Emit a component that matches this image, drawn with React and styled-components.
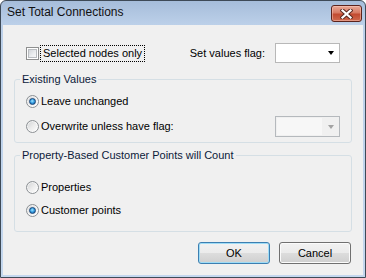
import React from 'react';
import styled, { createGlobalStyle } from 'styled-components';

const GlobalStyle = createGlobalStyle`
	html, body {
		margin: 0;
		padding: 0;
		background: #ffffff;
	}
	body {
		font-family: "Liberation Sans", Arial, sans-serif;
		font-size: 11px;
		color: #000000;
	}
`;

const Window = styled.div`
	width: 366px;
	height: 278px;
	box-sizing: border-box;
	display: flex;
	flex-direction: column;
	padding: 0 2px 2px;
	border: 1px solid #3e4a57;
	border-radius: 6px 6px 0 0;
	background: linear-gradient(#a6bdda 0, #bcd0e9 24px, #c4d7ee 100%);
	overflow: hidden;
`;

const TitleBar = styled.div`
	height: 24px;
	flex: none;
	display: flex;
	align-items: flex-start;
	padding: 4px 1px 0 4px;
	box-sizing: border-box;
`;

const Title = styled.div`
	flex: 1;
	font-size: 12px;
	line-height: 15px;
	color: #111111;
`;

const CloseButton = styled.div`
	width: 31px;
	height: 17px;
	box-sizing: border-box;
	border: 1px solid #5b231c;
	border-radius: 3px;
	background: linear-gradient(#e9a997 0%, #d77a63 45%, #c24a30 55%, #cf6a4f 100%);
	box-shadow: inset 0 0 0 1px rgba(255, 210, 200, 0.45);
	display: flex;
	align-items: center;
	justify-content: center;
`;

const Client = styled.div`
	flex: 1;
	display: flex;
	flex-direction: column;
	padding: 18px 11px 0;
	background: #f0f0f0;
`;

const TopRow = styled.div`
	height: 20px;
	display: flex;
	align-items: center;
	padding: 0 12px;
`;

const CheckLabel = styled.label`
	display: flex;
	align-items: center;
	gap: 1px;
`;

const CheckBox = styled.span`
	width: 13px;
	height: 13px;
	box-sizing: border-box;
	border: 1px solid #8e8f8f;
	background: #ffffff;
	display: flex;
	align-items: center;
	justify-content: center;

	&::after {
		content: '';
		width: 9px;
		height: 9px;
		box-sizing: border-box;
		border: 1px solid #b9bcc0;
		background: linear-gradient(135deg, #d3d6da 0%, #eceef0 60%, #f7f7f7 100%);
	}
`;

const FocusText = styled.span`
	padding: 1px 2px;
	line-height: 13px;
	border: 1px dotted #000000;
`;

const FlagField = styled.div`
	margin-left: auto;
	display: flex;
	align-items: center;
	gap: 10px;
`;

const Combo = styled.div`
	width: 65px;
	height: ${ ( { $h } ) => $h }px;
	box-sizing: border-box;
	display: flex;
	border: 1px solid ${ ( { $disabled } ) => ( $disabled ? '#b5b9bd' : '#b8b8b8' ) };
	background: ${ ( { $disabled } ) => ( $disabled ? '#f0f0f0' : '#ffffff' ) };
	padding: ${ ( { $disabled } ) => ( $disabled ? '1px 0 1px 1px' : '0' ) };
`;

const ComboField = styled.div`
	flex: 1;
	background: ${ ( { $disabled } ) => ( $disabled ? '#f7f7f7' : 'transparent' ) };
`;

const ComboArrow = styled.div`
	width: 17px;
	display: flex;
	align-items: center;
	justify-content: center;

	&::after {
		content: '';
		border-left: 3px solid transparent;
		border-right: 3px solid transparent;
		border-top: 4px solid ${ ( { $disabled } ) => ( $disabled ? '#a3a3a3' : '#000000' ) };
	}
`;

const Group = styled.fieldset`
	margin: ${ ( { $gap } ) => $gap }px 0 0;
	padding: 0;
	border: 1px solid #d5dfe5;
	border-radius: 3px;
	min-width: 0;
`;

const Legend = styled.legend`
	margin-left: 5px;
	padding: 0 2px;
	line-height: 13px;
	color: #0c1a3a;
`;

const GroupBody = styled.div`
	display: flex;
	flex-direction: column;
	gap: 7px;
	padding: ${ ( { $pad } ) => $pad };
`;

const OptionRow = styled.div`
	height: ${ ( { $h } ) => $h }px;
	display: flex;
	align-items: center;
	justify-content: space-between;
`;

const RadioLabel = styled.label`
	display: flex;
	align-items: center;
	gap: 2px;
	line-height: 13px;
`;

const Radio = styled.span`
	width: 13px;
	height: 13px;
	box-sizing: border-box;
	border-radius: 50%;
	border: 1px solid #8c9094;
	background: linear-gradient(135deg, #cfd1d3 0%, #ececec 50%, #ffffff 100%);
	box-shadow: inset 0 0 0 1px rgba(255, 255, 255, 0.6);
	display: flex;
	align-items: center;
	justify-content: center;

	&::after {
		content: '';
		display: ${ ( { $checked } ) => ( $checked ? 'block' : 'none' ) };
		width: 7px;
		height: 7px;
		box-sizing: border-box;
		border-radius: 50%;
		border: 1px solid #16457a;
		background: radial-gradient(circle at 45% 40%, #a4e6ff 0%, #3aa2e4 45%, #0f4f93 100%);
	}
`;

const ButtonRow = styled.div`
	margin-top: 10px;
	display: flex;
	justify-content: flex-end;
	gap: 9px;
	padding-right: 1px;
`;

const Button = styled.div`
	width: 72px;
	height: 22px;
	box-sizing: border-box;
	border: 1px solid ${ ( { $default } ) => ( $default ? '#3c7fb1' : '#707070' ) };
	border-radius: 3px;
	background: linear-gradient(#f2f2f2 0%, #ebebeb 50%, #dddddd 50%, #cfcfcf 100%);
	box-shadow: inset 0 0 0 1px ${ ( { $default } ) => ( $default ? '#9fdcf6' : '#fbfbfb' ) };
	display: flex;
	align-items: center;
	justify-content: center;
	line-height: 13px;
`;

const CloseGlyph = () => (
	<svg width="13" height="10" viewBox="0 0 13 10">
		<path d="M2.5 1.5 L10.5 8.5 M10.5 1.5 L2.5 8.5" stroke="#5a2a22" strokeWidth="4.2" strokeLinecap="square" />
		<path d="M2.5 1.5 L10.5 8.5 M10.5 1.5 L2.5 8.5" stroke="#ffffff" strokeWidth="2.2" strokeLinecap="square" />
	</svg>
);

const RadioOption = ( { checked, children } ) => (
	<RadioLabel>
		<Radio $checked={ checked } />
		<span>{ children }</span>
	</RadioLabel>
);

const Dropdown = ( { disabled, height } ) => (
	<Combo $disabled={ disabled } $h={ height }>
		<ComboField $disabled={ disabled } />
		<ComboArrow $disabled={ disabled } />
	</Combo>
);

const App = () => (
	<>
		<GlobalStyle />
		<Window>
			<TitleBar>
				<Title>Set Total Connections</Title>
				<CloseButton>
					<CloseGlyph />
				</CloseButton>
			</TitleBar>
			<Client>
				<TopRow>
					<CheckLabel>
						<CheckBox />
						<FocusText>Selected nodes only</FocusText>
					</CheckLabel>
					<FlagField>
						<span>Set values flag:</span>
						<Dropdown height={ 20 } />
					</FlagField>
				</TopRow>

				<Group $gap={ 10 }>
					<Legend>Existing Values</Legend>
					<GroupBody $pad="7px 11px 5px">
						<OptionRow $h={ 16 }>
							<RadioOption checked>Leave unchanged</RadioOption>
						</OptionRow>
						<OptionRow $h={ 21 }>
							<RadioOption>Overwrite unless have flag:</RadioOption>
							<Dropdown disabled height={ 21 } />
						</OptionRow>
					</GroupBody>
				</Group>

				<Group $gap={ 6 }>
					<Legend>Property-Based Customer Points will Count</Legend>
					<GroupBody $pad="17px 11px 13px">
						<OptionRow $h={ 16 }>
							<RadioOption>Properties</RadioOption>
						</OptionRow>
						<OptionRow $h={ 16 }>
							<RadioOption checked>Customer points</RadioOption>
						</OptionRow>
					</GroupBody>
				</Group>

				<ButtonRow>
					<Button $default>OK</Button>
					<Button>Cancel</Button>
				</ButtonRow>
			</Client>
		</Window>
	</>
);

export default App;
